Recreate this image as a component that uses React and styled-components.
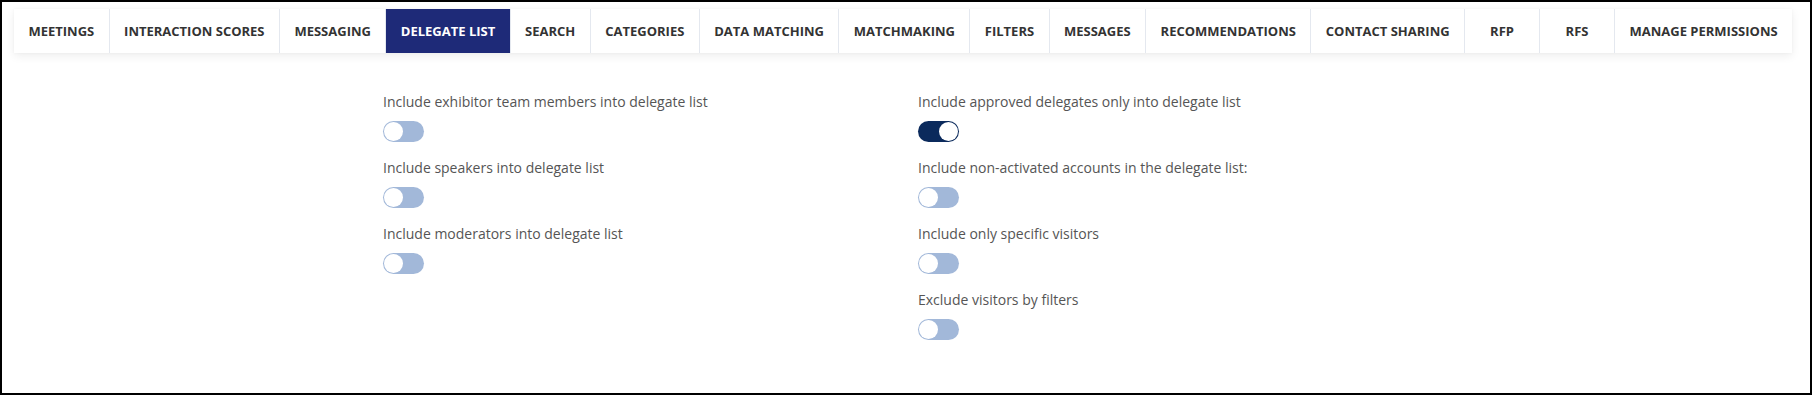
import React, { useState } from "react";
import styled, { createGlobalStyle } from "styled-components";

const GlobalStyle = createGlobalStyle`
  html, body {
    margin: 0;
    padding: 0;
    background: #ffffff;
  }
  body {
    font-family: "Open Sans", "Noto Sans", "Liberation Sans", sans-serif;
  }
  * { box-sizing: border-box; }
`;

const Frame = styled.div`
  width: 1812px;
  height: 395px;
  border: 2px solid #000;
  padding: 7px 18px 0 12px;
  background: #fff;
  overflow: hidden;
`;

const TabBar = styled.nav`
  display: flex;
  height: 44px;
  background: #fff;
  box-shadow: 0 3px 9px rgba(0, 0, 0, 0.07), 0 0 3px rgba(0, 0, 0, 0.04);
`;

const Tab = styled.button`
  flex: 1 1 auto;
  min-width: 75px;
  padding: 0 14px;
  display: flex;
  align-items: center;
  justify-content: center;
  border: 0;
  border-right: 1px solid #e4e8ef;
  background: ${(p) => (p.$active ? "#1e2a78" : "#fff")};
  color: ${(p) => (p.$active ? "#fff" : "#333")};
  font-family: "Open Sans", "Noto Sans", sans-serif;
  font-weight: 700;
  font-size: 13px;
  text-transform: uppercase;
  white-space: nowrap;
  cursor: pointer;
  &:last-child {
    border-right: 0;
  }
`;

const Content = styled.div`
  display: grid;
  grid-template-columns: repeat(2, 535px);
  justify-content: center;
  padding-top: 39px;
`;

const Column = styled.div`
  padding: 0 15px;
  display: flex;
  flex-direction: column;
  gap: 16px;
`;

const Field = styled.div`
  display: flex;
  flex-direction: column;
  align-items: flex-start;
`;

const Label = styled.label`
  display: block;
  font-size: 14px;
  line-height: 20px;
  color: #555;
  margin-bottom: 9px;
`;

const Switch = styled.button`
  position: relative;
  width: 41px;
  height: 21px;
  padding: 0;
  border: 0;
  border-radius: 11px;
  background: ${(p) => (p.$on ? "#0b2a5c" : "#a2b8d9")};
  cursor: pointer;
  &::after {
    content: "";
    position: absolute;
    top: 1px;
    left: ${(p) => (p.$on ? "21px" : "1px")};
    width: 19px;
    height: 19px;
    border-radius: 50%;
    background: #fff;
  }
`;

const tabs = [
  "Meetings",
  "Interaction Scores",
  "Messaging",
  "Delegate List",
  "Search",
  "Categories",
  "Data Matching",
  "Matchmaking",
  "Filters",
  "Messages",
  "Recommendations",
  "Contact Sharing",
  "RFP",
  "RFS",
  "Manage Permissions",
];

const leftFields = [
  { label: "Include exhibitor team members into delegate list", on: false },
  { label: "Include speakers into delegate list", on: false },
  { label: "Include moderators into delegate list", on: false },
];

const rightFields = [
  { label: "Include approved delegates only into delegate list", on: true },
  { label: "Include non-activated accounts in the delegate list:", on: false },
  { label: "Include only specific visitors", on: false },
  { label: "Exclude visitors by filters", on: false },
];

function ToggleField({ label, initial }) {
  const [on, setOn] = useState(initial);
  return (
    <Field>
      <Label>{label}</Label>
      <Switch
        type="button"
        role="switch"
        aria-checked={on}
        aria-label={label}
        $on={on}
        onClick={() => setOn(!on)}
      />
    </Field>
  );
}

export default function App() {
  const [active, setActive] = useState("Delegate List");
  return (
    <>
      <GlobalStyle />
      <Frame>
        <TabBar>
          {tabs.map((t) => (
            <Tab key={t} $active={t === active} onClick={() => setActive(t)}>
              {t}
            </Tab>
          ))}
        </TabBar>
        <Content>
          <Column>
            {leftFields.map((f) => (
              <ToggleField key={f.label} label={f.label} initial={f.on} />
            ))}
          </Column>
          <Column>
            {rightFields.map((f) => (
              <ToggleField key={f.label} label={f.label} initial={f.on} />
            ))}
          </Column>
        </Content>
      </Frame>
    </>
  );
}
